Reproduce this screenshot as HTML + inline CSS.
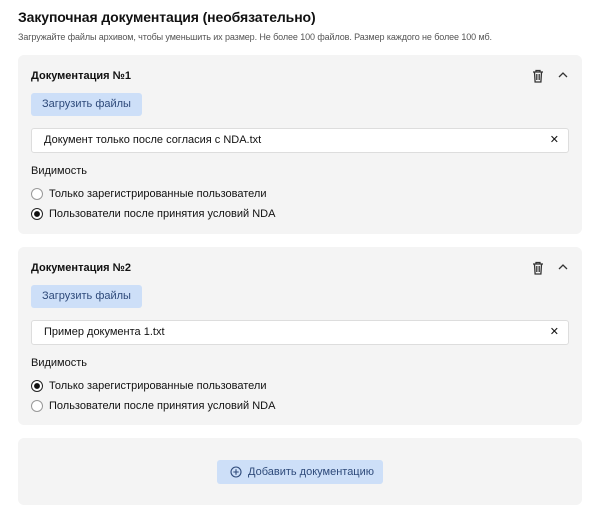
<!DOCTYPE html>
<html><head><meta charset="utf-8"><style>
*{box-sizing:border-box;margin:0;padding:0}
body{width:600px;height:510px;background:#fff;font-family:"Liberation Sans",sans-serif;color:#111;position:relative;overflow:hidden}
.a{position:absolute}
h1{position:absolute;left:18px;top:9px;font-size:14px;font-weight:bold;letter-spacing:-0.1px}
.sub{left:18px;top:32px;font-size:9px;color:#555;letter-spacing:-0.1px}
.card{position:absolute;left:18px;width:564px;background:#f4f4f4;border-radius:6px}
.t{position:absolute;left:13px;font-size:11px;font-weight:bold}
.btn{position:absolute;left:13px;width:111px;height:23px;background:#cddff8;border-radius:3px;font-size:11px;color:#2e4a7a;text-align:center;line-height:23px}
.inp{position:absolute;left:13px;width:538px;height:25px;background:#fff;border:1px solid #ddd;border-radius:3px;font-size:11px;line-height:23px;padding-left:12px}
.inp .x{position:absolute;right:9px;top:0;font-size:11px}
.v{position:absolute;left:13px;font-size:11px}
.r{position:absolute;left:13px;font-size:11px;height:14px;line-height:14px;padding-left:18px}
.r:before{content:"";position:absolute;left:0;top:1px;width:10px;height:10px;border:1px solid #999;border-radius:50%;background:#fff}
.r.on:before{border-color:#222;background:radial-gradient(circle,#111 2.6px,#fff 3.2px)}
.ic{position:absolute;top:14px}
</style></head><body>
<h1>Закупочная документация (необязательно)</h1>
<div class="a sub">Загружайте файлы архивом, чтобы уменьшить их размер. Не более 100 файлов. Размер каждого не более 100 мб.</div>

<div class="card" style="top:55px;height:179px">
<div class="t" style="top:15px">Документация №1</div>
<svg class="ic" style="left:514px" width="12" height="14" viewBox="0 0 12 14"><path d="M1 3h10M4 3V1.5h4V3M2.5 3.5l.6 9.5h5.8l.6-9.5M4.8 5v6M7.2 5v6" fill="none" stroke="#333" stroke-width="1.3"/></svg>
<svg class="ic" style="left:540px;top:16px" width="10" height="8" viewBox="0 0 10 8"><path d="M1 6l4-4 4 4" fill="none" stroke="#333" stroke-width="1.3"/></svg>
<div class="btn" style="top:38px">Загрузить файлы</div>
<div class="inp" style="top:73px">Документ только после согласия с NDA.txt<span class="x">✕</span></div>
<div class="v" style="top:110px">Видимость</div>
<div class="r" style="top:132px">Только зарегистрированные пользователи</div>
<div class="r on" style="top:152px">Пользователи после принятия условий NDA</div>
</div>

<div class="card" style="top:247px;height:178px">
<div class="t" style="top:15px">Документация №2</div>
<svg class="ic" style="left:514px" width="12" height="14" viewBox="0 0 12 14"><path d="M1 3h10M4 3V1.5h4V3M2.5 3.5l.6 9.5h5.8l.6-9.5M4.8 5v6M7.2 5v6" fill="none" stroke="#333" stroke-width="1.3"/></svg>
<svg class="ic" style="left:540px;top:16px" width="10" height="8" viewBox="0 0 10 8"><path d="M1 6l4-4 4 4" fill="none" stroke="#333" stroke-width="1.3"/></svg>
<div class="btn" style="top:38px">Загрузить файлы</div>
<div class="inp" style="top:73px">Пример документа 1.txt<span class="x">✕</span></div>
<div class="v" style="top:110px">Видимость</div>
<div class="r on" style="top:132px">Только зарегистрированные пользователи</div>
<div class="r" style="top:152px">Пользователи после принятия условий NDA</div>
</div>

<div class="card" style="top:438px;height:67px">
<div class="a" style="left:199px;top:22px;width:166px;height:24px;background:#cddff8;border-radius:3px;font-size:11px;color:#2e4a7a;line-height:24px;padding-left:31px;white-space:nowrap">Добавить документацию
<svg class="a" style="left:13px;top:6px" width="12" height="12" viewBox="0 0 12 12"><circle cx="6" cy="6" r="5" fill="none" stroke="#2e4a7a" stroke-width="1.1"/><path d="M6 3.3v5.4M3.3 6h5.4" stroke="#2e4a7a" stroke-width="1.1"/></svg></div>
</div>
</body></html>
